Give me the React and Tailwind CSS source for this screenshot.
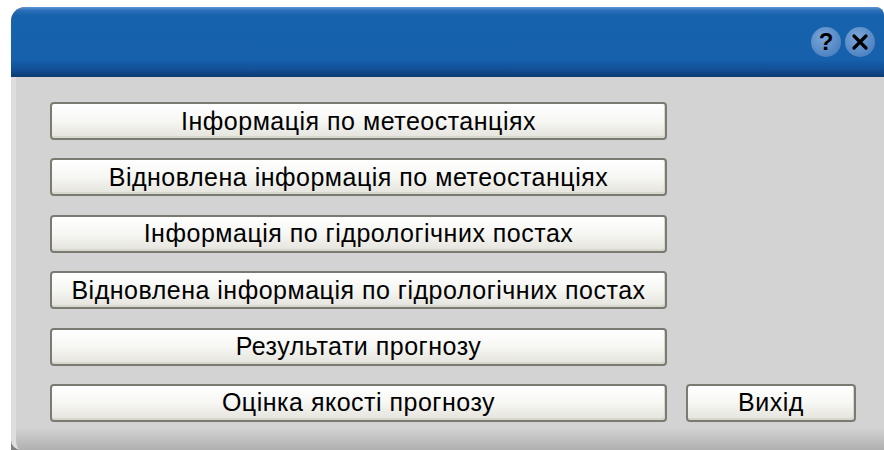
export default function App() {
  const items = [
    'Інформація по метеостанціях',
    'Відновлена інформація по метеостанціях',
    'Інформація по гідрологічних постах',
    'Відновлена інформація по гідрологічних постах',
    'Результати прогнозу',
    'Оцінка якості прогнозу',
  ];

  const btn =
    'h-[38px] rounded-[4px] border-2 border-[#7b7a72] bg-gradient-to-b from-[#ffffff] via-[#f6f6f3] to-[#e4e3dc] text-black text-[25px] tracking-[0.5px] leading-none font-["Liberation_Sans",sans-serif] flex items-center justify-center shadow-[inset_-1px_-2px_0_#d8d7ce]';

  return (
    <div className="w-[884px] h-[450px] bg-white overflow-hidden">
      <div className="ml-[11px] mt-[7px] w-[873px] h-[443px] flex flex-col rounded-tl-[14px] rounded-tr-[8px] overflow-hidden bg-[#808080]">
        {/* title bar */}
        <div className="h-[70px] shrink-0 rounded-tl-[14px] rounded-tr-[8px] bg-[linear-gradient(to_bottom,#5d96d6_0%,#2a6fb8_5%,#1762ad_12%,#1660ac_75%,#12519a_88%,#0c3a72_100%)] flex items-center justify-end gap-[4px] pr-[9px]">
          <div className="w-[30px] h-[30px] rounded-full bg-[radial-gradient(circle_at_40%_35%,#7aa6da,#3f76b8)] flex items-center justify-center text-black font-bold text-[24px] leading-none font-['Liberation_Sans',sans-serif]">
            ?
          </div>
          <div className="w-[30px] h-[30px] rounded-full bg-[radial-gradient(circle_at_40%_35%,#7aa6da,#3f76b8)] flex items-center justify-center">
            <svg width="18" height="18" viewBox="0 0 18 18">
              <path d="M3 3 L15 15 M15 3 L3 15" stroke="#000" strokeWidth="3.2" strokeLinecap="round" />
            </svg>
          </div>
        </div>

        {/* body */}
        <div className="flex-1 bg-gradient-to-b from-[#d3d3d3] via-[#d3d3d3] via-[94%] to-[#b0b0b0] border-l-[5px] border-[#dedede] rounded-bl-[10px] pl-[34px] pt-[25px]">
          <div className="flex flex-col gap-[18.4px] w-[617px]">
            {items.map((t, i) => (
              <div key={i} className={btn}>
                {t}
              </div>
            ))}
          </div>
          <div className="relative">
            <div className={btn + ' absolute left-[636px] -top-[38px] w-[170px]'}>Вихід</div>
          </div>
        </div>
      </div>
    </div>
  );
}
